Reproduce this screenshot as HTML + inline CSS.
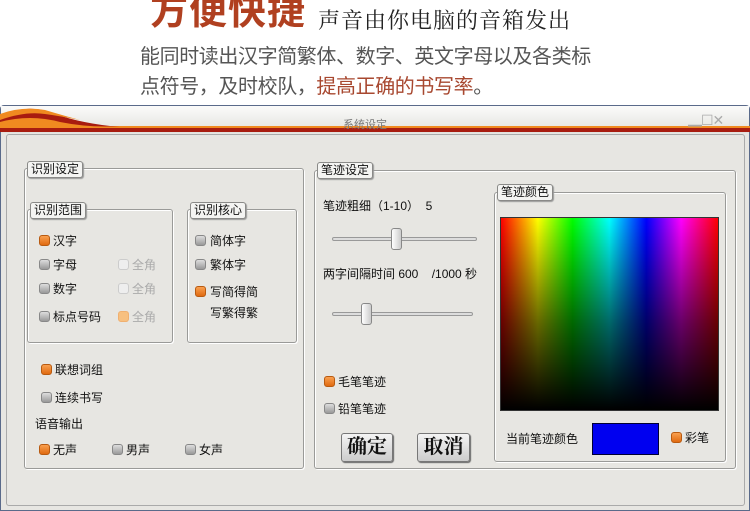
<!DOCTYPE html>
<html><head><meta charset="utf-8"><style>
*{margin:0;padding:0;box-sizing:border-box}
body{width:750px;height:511px;overflow:hidden;background:#fff;position:relative;font-family:"Liberation Sans","Noto Sans CJK SC",sans-serif;}
.a{position:absolute;white-space:nowrap}
.t{font-size:12px;color:#111}
.grp{position:absolute;border:1px solid #9a9a98;border-radius:3px;box-shadow:1px 1px 0 #fff inset,1px 1px 0 #fff}
.lab{position:absolute;background:#f4f4f2;border:1px solid #8a8a88;border-radius:3px;font-size:12px;padding:0 3px;line-height:15px;color:#111;box-shadow:1px 1px 1px #999}
.cb{position:absolute;width:11px;height:11px;border-radius:3px;background:linear-gradient(#ddd,#999);border:1px solid #888}
.on{background:linear-gradient(#f9a050,#e06a10);border-color:#b85a10}
.dis{background:#eee;border-color:#ccc}
.dison{background:#f7c080;border-color:#f0b070}
.track{position:absolute;height:4px;border:1px solid #999;border-radius:2px;background:#ddd}
.thumb{position:absolute;width:11px;height:22px;border:1px solid #888;border-radius:3px;background:linear-gradient(90deg,#fff,#ccc)}
.btn{position:absolute;border:1px solid #777;border-radius:3px;background:linear-gradient(#f4f4f4,#ccc);font-family:"Liberation Serif","Noto Serif CJK SC",serif;font-size:20px;font-weight:bold;text-align:center;line-height:27px;color:#111;box-shadow:1px 1px 1px #666}
</style></head><body>
<div class="a" style="left:150px;top:-20px;font-size:38px;font-weight:bold;color:#b04020;letter-spacing:1px">方便快捷</div>
<div class="a" style="left:318px;top:4px;font-size:22px;color:#222;font-family:'Liberation Serif','Noto Serif CJK SC',serif;letter-spacing:1px">声音由你电脑的音箱发出</div>
<div class="a" style="left:140px;top:40px;font-size:20px;color:#555;letter-spacing:-0.4px">能同时读出汉字简繁体、数字、英文字母以及各类标</div>
<div class="a" style="left:140px;top:70px;font-size:20px;color:#555;letter-spacing:-0.4px">点符号，及时校队，<span style="color:#a84830">提高正确的书写率</span>。</div>

<div class="a" style="left:0;top:105px;width:750px;height:406px;background:#e7e6e2;border:1px solid #5a6a8a;border-radius:4px 4px 0 0"></div>
<div class="a" style="left:1px;top:106px;width:748px;height:27px;background:linear-gradient(#fbfbfa,#e2e1dd)"></div>
<svg class="a" style="left:0;top:106px" width="750" height="28"><path d="M0 10 Q25 -2 50 6 Q75 16 110 20 L750 20 L750 26 L0 26Z" fill="#a81c10"/><path d="M0 8 Q22 0 45 4 Q65 10 80 14 Q60 10 45 8 Q25 5 0 14Z" fill="#f08a20"/><path d="M0 16 Q30 8 60 16 Q90 22 120 20 L750 20 L750 22 L0 22Z" fill="#f08a20"/></svg>
<div class="a" style="left:343px;top:116px;font-size:11px;color:#777">系统设定</div>
<div class="a" style="left:688px;top:110px;font-size:14px;color:#aaa;letter-spacing:-1px">▁☐✕</div>
<div class="a" style="left:6px;top:134px;width:739px;height:372px;border:1px solid #aaa;border-radius:3px"></div>

<div class="grp" style="left:24px;top:168px;width:280px;height:301px"></div>
<div class="lab" style="left:27px;top:161px">识别设定</div>
<div class="grp" style="left:27px;top:209px;width:146px;height:134px"></div>
<div class="lab" style="left:30px;top:202px">识别范围</div>
<div class="grp" style="left:187px;top:209px;width:110px;height:134px"></div>
<div class="lab" style="left:190px;top:202px">识别核心</div>

<div class="cb on" style="left:39px;top:235px"></div><div class="a t" style="left:53px;top:232px">汉字</div>
<div class="cb" style="left:39px;top:259px"></div><div class="a t" style="left:53px;top:256px">字母</div>
<div class="cb dis" style="left:118px;top:259px"></div><div class="a t" style="left:132px;top:256px;color:#aaa">全角</div>
<div class="cb" style="left:39px;top:283px"></div><div class="a t" style="left:53px;top:280px">数字</div>
<div class="cb dis" style="left:118px;top:283px"></div><div class="a t" style="left:132px;top:280px;color:#aaa">全角</div>
<div class="cb" style="left:39px;top:311px"></div><div class="a t" style="left:53px;top:308px">标点号码</div>
<div class="cb dison" style="left:118px;top:311px"></div><div class="a t" style="left:132px;top:308px;color:#aaa">全角</div>

<div class="cb" style="left:195px;top:235px"></div><div class="a t" style="left:210px;top:232px">简体字</div>
<div class="cb" style="left:195px;top:259px"></div><div class="a t" style="left:210px;top:256px">繁体字</div>
<div class="cb on" style="left:195px;top:286px"></div><div class="a t" style="left:210px;top:283px">写简得简</div>
<div class="a t" style="left:210px;top:304px">写繁得繁</div>

<div class="cb on" style="left:41px;top:364px"></div><div class="a t" style="left:55px;top:361px">联想词组</div>
<div class="cb" style="left:41px;top:392px"></div><div class="a t" style="left:55px;top:389px">连续书写</div>
<div class="a t" style="left:35px;top:415px">语音输出</div>
<div class="cb on" style="left:39px;top:444px"></div><div class="a t" style="left:53px;top:441px">无声</div>
<div class="cb" style="left:112px;top:444px"></div><div class="a t" style="left:126px;top:441px">男声</div>
<div class="cb" style="left:185px;top:444px"></div><div class="a t" style="left:199px;top:441px">女声</div>

<div class="grp" style="left:314px;top:170px;width:422px;height:299px"></div>
<div class="lab" style="left:317px;top:162px">笔迹设定</div>
<div class="a t" style="left:323px;top:197px">笔迹粗细（1-10）&nbsp; 5</div>
<div class="track" style="left:332px;top:237px;width:145px"></div><div class="thumb" style="left:391px;top:228px"></div>
<div class="a t" style="left:323px;top:265px">两字间隔时间 600 &nbsp;&nbsp; /1000 秒</div>
<div class="track" style="left:332px;top:312px;width:141px"></div><div class="thumb" style="left:361px;top:303px"></div>
<div class="cb on" style="left:324px;top:376px"></div><div class="a t" style="left:338px;top:373px">毛笔笔迹</div>
<div class="cb" style="left:324px;top:403px"></div><div class="a t" style="left:338px;top:400px">铅笔笔迹</div>
<div class="btn" style="left:341px;top:433px;width:52px;height:29px">确定</div>
<div class="btn" style="left:417px;top:433px;width:53px;height:29px">取消</div>

<div class="grp" style="left:494px;top:192px;width:232px;height:270px"></div>
<div class="lab" style="left:497px;top:184px">笔迹颜色</div>
<div class="a" style="left:500px;top:217px;width:219px;height:194px;border:1px solid #333;background:linear-gradient(rgba(0,0,0,0),rgba(0,0,0,.6) 55%,#000),linear-gradient(90deg,#f00,#ff0 17%,#0f0 33%,#0ff 50%,#00f 67%,#f0f 83%,#f00)"></div>
<div class="a t" style="left:506px;top:430px">当前笔迹颜色</div>
<div class="a" style="left:592px;top:423px;width:67px;height:32px;background:#0000f0;border:1px solid #003"></div>
<div class="cb on" style="left:671px;top:432px"></div><div class="a t" style="left:685px;top:429px">彩笔</div>
</body></html>
